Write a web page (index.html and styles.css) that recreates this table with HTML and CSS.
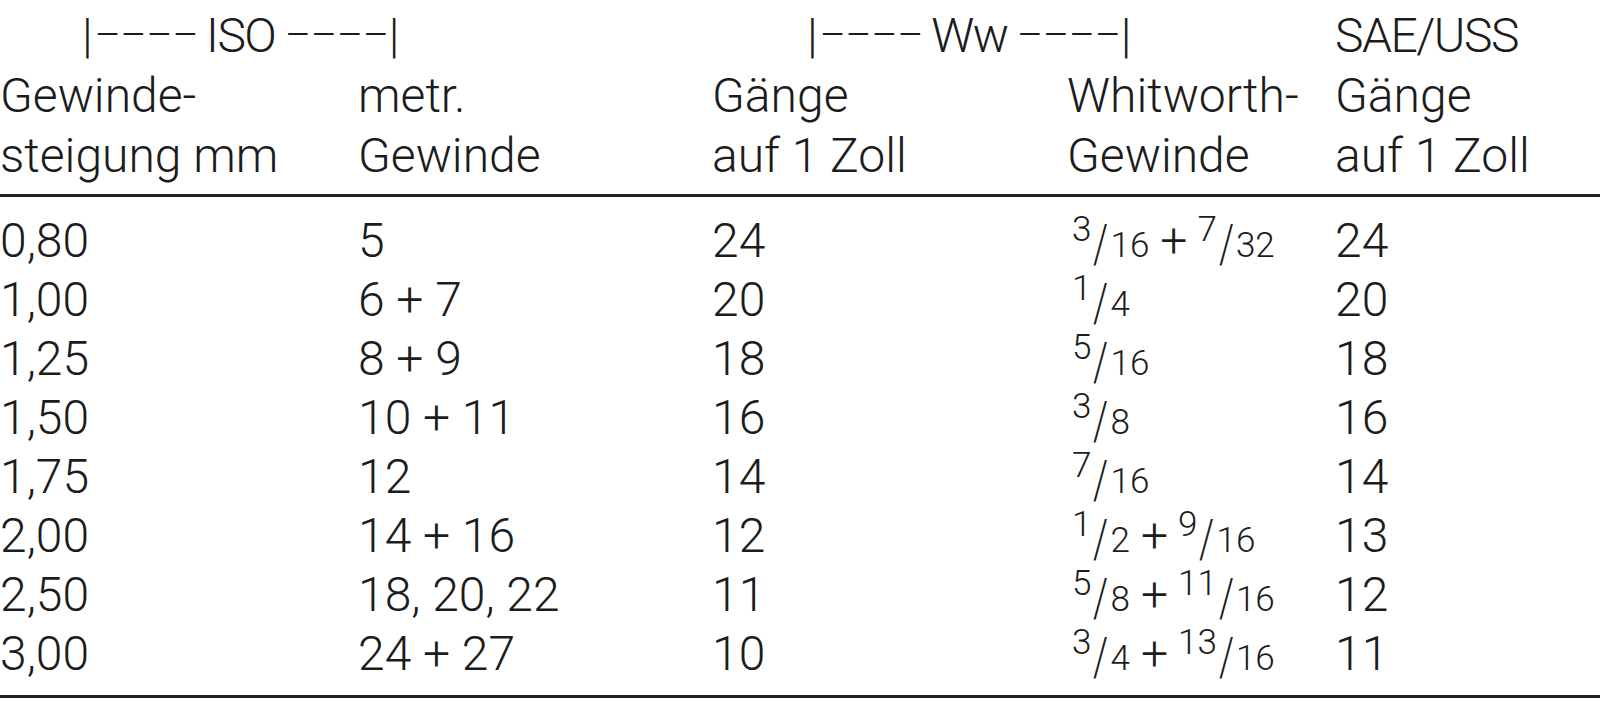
FILE: index.html
```html
<!DOCTYPE html>
<html lang="de">
<head>
<meta charset="utf-8">
<title>Gewindetabelle</title>
<link rel="stylesheet" href="styles.css">
</head>
<body>
<table class="thread-table">
  <colgroup>
    <col class="c1"><col class="c2"><col class="c3"><col class="c4"><col class="c5">
  </colgroup>
  <thead>
    <tr class="group-row">
      <th colspan="2" class="grp grp-iso">|<span class="dash">––––</span> <span class="grp-word">ISO</span> <span class="dash">––––</span>|</th>
      <th colspan="2" class="grp grp-ww">|<span class="dash">––––</span> <span class="grp-word">Ww</span> <span class="dash">––––</span>|</th>
      <th><span class="grp-word">SAE/USS</span></th>
    </tr>
    <tr class="label-row">
      <th>Gewinde-<br>steigung mm</th>
      <th>metr.<br>Gewinde</th>
      <th>Gänge<br>auf 1 Zoll</th>
      <th>Whitworth-<br>Gewinde</th>
      <th>Gänge<br>auf 1 Zoll</th>
    </tr>
  </thead>
  <tbody>
    <tr class="first"><td>0,80</td><td>5</td><td>24</td><td class="frac-cell"><span class="num">3</span><span class="sl">/</span><span class="den">16</span><span class="plus">+</span><span class="num">7</span><span class="sl">/</span><span class="den">32</span></td><td>24</td></tr>
    <tr><td>1,00</td><td>6 + 7</td><td>20</td><td class="frac-cell"><span class="num">1</span><span class="sl">/</span><span class="den">4</span></td><td>20</td></tr>
    <tr><td>1,25</td><td>8 + 9</td><td>18</td><td class="frac-cell"><span class="num">5</span><span class="sl">/</span><span class="den">16</span></td><td>18</td></tr>
    <tr><td>1,50</td><td>10 + 11</td><td>16</td><td class="frac-cell"><span class="num">3</span><span class="sl">/</span><span class="den">8</span></td><td>16</td></tr>
    <tr><td>1,75</td><td>12</td><td>14</td><td class="frac-cell"><span class="num">7</span><span class="sl">/</span><span class="den">16</span></td><td>14</td></tr>
    <tr><td>2,00</td><td>14 + 16</td><td>12</td><td class="frac-cell"><span class="num">1</span><span class="sl">/</span><span class="den">2</span><span class="plus">+</span><span class="num">9</span><span class="sl">/</span><span class="den">16</span></td><td>13</td></tr>
    <tr><td>2,50</td><td>18, 20, 22</td><td>11</td><td class="frac-cell"><span class="num">5</span><span class="sl">/</span><span class="den">8</span><span class="plus">+</span><span class="num">11</span><span class="sl">/</span><span class="den">16</span></td><td>12</td></tr>
    <tr class="last"><td>3,00</td><td>24 + 27</td><td>10</td><td class="frac-cell"><span class="num">3</span><span class="sl">/</span><span class="den">4</span><span class="plus">+</span><span class="num">13</span><span class="sl">/</span><span class="den">16</span></td><td>11</td></tr>
  </tbody>
</table>
</body>
</html>
```

FILE: styles.css
```css
html, body {
  margin: 0;
  padding: 0;
  background: #ffffff;
}

body {
  font-family: Roboto, "Liberation Sans", sans-serif;
  font-weight: 300;
  font-size: 48px;
  color: #1c1c1c;
}

.thread-table {
  width: 1600px;
  border-collapse: collapse;
  table-layout: fixed;
  margin-top: 6px;
}

.c1 { width: 358px; }
.c2 { width: 354px; }
.c3 { width: 355px; }
.c4 { width: 268px; }
.c5 { width: 265px; }

.thread-table th,
.thread-table td {
  font-weight: 300;
  text-align: left;
  vertical-align: top;
  padding: 0;
  line-height: 60px;
  white-space: nowrap;
}

.thread-table td {
  line-height: 59px;
}

.grp {
  word-spacing: -4px;
}

.grp-iso { padding-left: 82px !important; }
.grp-ww { padding-left: 95px !important; }

.dash {
  font-size: 0.83em;
  margin-left: 2px;
  vertical-align: 0.08em;
  line-height: 0;
}

.grp-word {
  letter-spacing: -1.5px;
}

.label-row th {
  padding-bottom: 8px !important;
  border-bottom: 3px solid #222;
}

.thread-table tbody tr.first td { padding-top: 14px; }
.thread-table tbody tr.last td {
  padding-bottom: 12px;
  border-bottom: 3px solid #222;
}

.thread-table td.frac-cell {
  padding-left: 5px;
}

.num,
.den,
.sl {
  line-height: 0;
}

.num,
.den {
  font-size: 0.73em;
}

.num {
  vertical-align: 0.45em;
}

.sl {
  display: inline-block;
  font-size: 1.1em;
  vertical-align: -0.1em;
  transform: scaleX(0.72);
  margin: 0 -1px;
}

.plus {
  margin: 0 10px 0 11px;
}
```
